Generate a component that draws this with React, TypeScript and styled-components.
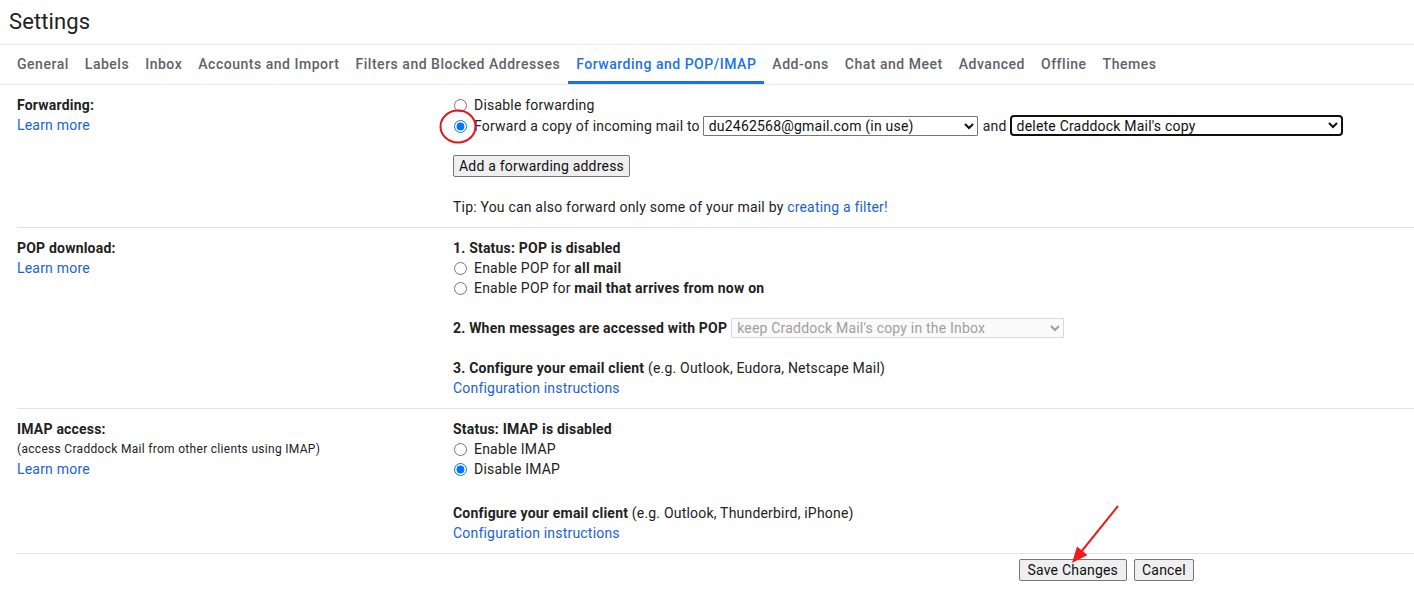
import React from "react";
import styled, { createGlobalStyle } from "styled-components";

const Global = createGlobalStyle`
  html, body { margin: 0; padding: 0; background: #fff; }
  body { font-family: Roboto, "Liberation Sans", Arial, sans-serif; color: #222; }
  * { box-sizing: border-box; }
`;

const Page = styled.div`
  position: relative;
  width: 1414px;
  min-height: 615px;
  font-size: 14px;
  line-height: 20px;
  letter-spacing: 0.2px;
`;

const Header = styled.div`
  height: 45px;
  display: flex;
  align-items: center;
  padding: 0 0 1px 9px;
  border-bottom: 1px solid #e8eaed;
  font-size: 22px;
  letter-spacing: 0.1px;
  color: #202124;
`;

const TabBar = styled.nav`
  display: flex;
  padding-left: 9px;
  height: 40px;
  border-bottom: 1px solid #e8eaed;
`;

const Tab = styled.div<{ $active?: boolean }>`
  display: flex;
  align-items: center;
  padding: 1px 8px 0 8px;
  font-size: 14px;
  font-weight: 500;
  letter-spacing: 0.52px;
  color: ${(p) => (p.$active ? "#1a73e8" : "#5f6368")};
  border-bottom: 3px solid ${(p) => (p.$active ? "#1a73e8" : "transparent")};
  white-space: nowrap;
`;

const Content = styled.div`
  padding-left: 17px;
`;

const Row = styled.section`
  display: grid;
  grid-template-columns: 436px 1fr;
  padding: 10px 0;
  border-bottom: 1px solid #e3e3e3;
`;

const Col = styled.div`
  display: flex;
  flex-direction: column;
`;

const Label = styled.div`
  font-weight: 700;
  height: 20px;
`;

const SubText = styled.div`
  font-size: 12px;
  height: 20px;
  line-height: 20px;
  letter-spacing: 0.3px;
`;

const Link = styled.a<{ $inline?: boolean }>`
  color: #1a62d8;
  text-decoration: none;
  cursor: pointer;
  ${(p) => (p.$inline ? "" : "display: block; height: 20px;")}
`;

const Line = styled.div<{ $h?: number }>`
  display: flex;
  align-items: center;
  height: ${(p) => p.$h ?? 20}px;
  white-space: nowrap;
`;

const Spacer = styled.div<{ $h: number }>`
  height: ${(p) => p.$h}px;
`;

const Radio = styled.input.attrs({ type: "radio" })`
  width: 13px;
  height: 13px;
  margin: 1px 7px 0 1px;
  accent-color: #0075ff;
`;

const Bold = styled.b`
  font-weight: 700;
`;

const Select = styled.select<{ $w: number; $focus?: boolean; $ml?: number }>`
  width: ${(p) => p.$w}px;
  height: ${(p) => (p.$focus ? 21 : 20)}px;
  margin-left: ${(p) => p.$ml ?? 3}px;
  font-family: Roboto, "Liberation Sans", Arial, sans-serif;
  font-size: 14px;
  letter-spacing: 0.2px;
  color: #111;
  background: #fff;
  border: ${(p) => (p.$focus ? "2px solid #101010" : "1px solid #767676")};
  border-radius: ${(p) => (p.$focus ? "4px" : "1px")};
  padding: 0 1px;
  outline: none;
  &:disabled {
    color: #a0a0a0;
    border-color: #d8d8d8;
    background: #fafafa;
    opacity: 1;
  }
`;

const And = styled.span`
  margin: 0 3px 0 5px;
`;

const Button = styled.button<{ $px?: number }>`
  font-family: Roboto, "Liberation Sans", Arial, sans-serif;
  font-size: 14px;
  letter-spacing: 0.2px;
  color: #111;
  background: #efefef;
  border: 1px solid #767676;
  border-radius: 2px;
  height: 22px;
  padding: 0 ${(p) => p.$px ?? 6}px;
  line-height: 18px;
  cursor: pointer;
`;

const ButtonLine = styled.div`
  display: flex;
`;

const Actions = styled.div`
  display: flex;
  gap: 7px;
  padding: 5px 0 0 1002px;
`;

const Overlay = styled.svg`
  position: absolute;
  left: 0;
  top: 0;
  pointer-events: none;
`;

const tabs = [
  "General",
  "Labels",
  "Inbox",
  "Accounts and Import",
  "Filters and Blocked Addresses",
  "Forwarding and POP/IMAP",
  "Add-ons",
  "Chat and Meet",
  "Advanced",
  "Offline",
  "Themes",
];

export default function App() {
  return (
    <Page>
      <Global />
      <Header>Settings</Header>
      <TabBar>
        {tabs.map((t) => (
          <Tab key={t} $active={t === "Forwarding and POP/IMAP"}>
            {t}
          </Tab>
        ))}
      </TabBar>
      <Content>
        <Row>
          <Col>
            <Label>Forwarding:</Label>
            <Link>Learn more</Link>
          </Col>
          <Col>
            <Line>
              <Radio name="fwd" />
              Disable forwarding
            </Line>
            <Line $h={21}>
              <Radio name="fwd" defaultChecked />
              Forward a copy of incoming mail to
              <Select $w={275} defaultValue="a">
                <option value="a">du2462568@gmail.com (in use)</option>
              </Select>
              <And>and</And>
              <Select $w={333} $focus $ml={0} defaultValue="d">
                <option value="d">delete Craddock Mail's copy</option>
              </Select>
            </Line>
            <Spacer $h={19} />
            <ButtonLine>
              <Button $px={5}>Add a forwarding address</Button>
            </ButtonLine>
            <Spacer $h={20} />
            <Line>
              Tip: You can also forward only some of your mail by&nbsp;
              <Link $inline>creating a filter!</Link>
            </Line>
          </Col>
        </Row>
        <Row>
          <Col>
            <Label>POP download:</Label>
            <Link>Learn more</Link>
          </Col>
          <Col>
            <Line>
              <Bold>1. Status: POP is disabled</Bold>
            </Line>
            <Line>
              <Radio name="pop" />
              Enable POP for&nbsp;<Bold>all mail</Bold>
            </Line>
            <Line>
              <Radio name="pop" />
              Enable POP for&nbsp;<Bold>mail that arrives from now on</Bold>
            </Line>
            <Spacer $h={20} />
            <Line>
              <Bold>2. When messages are accessed with POP</Bold>
              <Select $w={333} $ml={4} disabled defaultValue="k">
                <option value="k">keep Craddock Mail's copy in the Inbox</option>
              </Select>
            </Line>
            <Spacer $h={20} />
            <Line>
              <Bold>3. Configure your email client</Bold>&nbsp;(e.g. Outlook, Eudora, Netscape Mail)
            </Line>
            <Link>Configuration instructions</Link>
          </Col>
        </Row>
        <Row>
          <Col>
            <Label>IMAP access:</Label>
            <SubText>(access Craddock Mail from other clients using IMAP)</SubText>
            <Link>Learn more</Link>
          </Col>
          <Col>
            <Line>
              <Bold>Status: IMAP is disabled</Bold>
            </Line>
            <Line>
              <Radio name="imap" />
              Enable IMAP
            </Line>
            <Line>
              <Radio name="imap" defaultChecked />
              Disable IMAP
            </Line>
            <Spacer $h={24} />
            <Line>
              <Bold>Configure your email client</Bold>&nbsp;(e.g. Outlook, Thunderbird, iPhone)
            </Line>
            <Link>Configuration instructions</Link>
          </Col>
        </Row>
        <Actions>
          <Button $px={7.5}>Save Changes</Button>
          <Button $px={7.5}>Cancel</Button>
        </Actions>
      </Content>
      <Overlay width="1414" height="615" viewBox="0 0 1414 615">
        <ellipse cx="458" cy="126.5" rx="17.5" ry="16" fill="none" stroke="#e8141a" strokeWidth="2" />
        <line x1="1118" y1="506" x2="1081" y2="552" stroke="#ee1c1c" strokeWidth="2" />
        <polygon points="1072,563 1087.5,555 1077,546.5" fill="#ee1c1c" />
      </Overlay>
    </Page>
  );
}
